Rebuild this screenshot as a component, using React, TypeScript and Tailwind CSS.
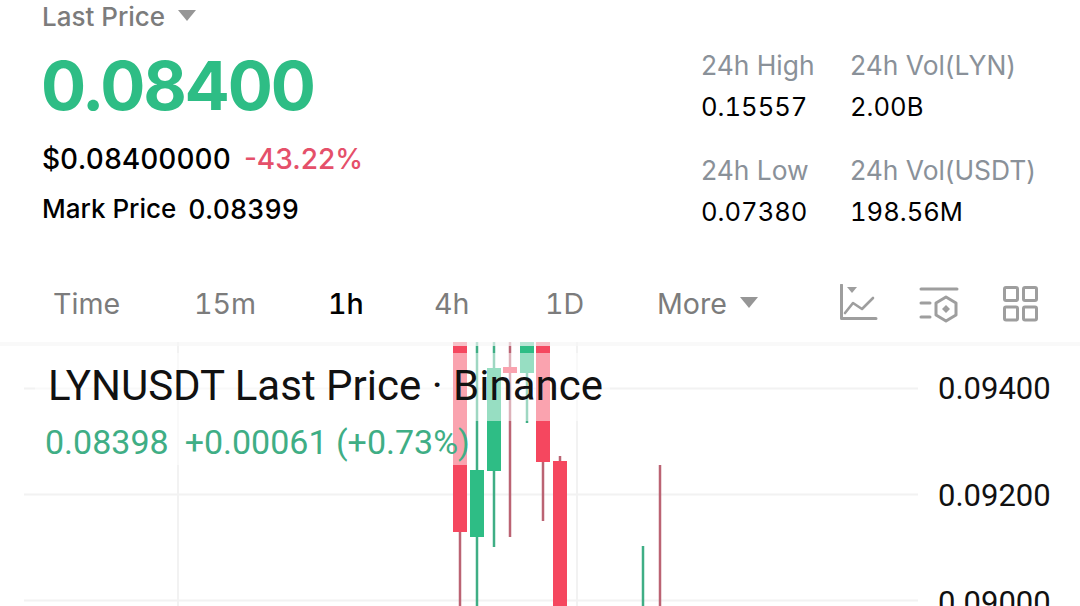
const tabs = [
  { label: "Time", width: "w-[141px]" },
  { label: "15m", width: "w-[134px]" },
  { label: "1h", width: "w-[106px]" },
  { label: "4h", width: "w-[111px]" },
  { label: "1D", width: "w-[112px]" },
];

const stats = [
  [
    { label: "24h High", value: "0.15557" },
    { label: "24h Low", value: "0.07380" },
  ],
  [
    { label: "24h Vol(LYN)", value: "2.00B" },
    { label: "24h Vol(USDT)", value: "198.56M" },
  ],
];

const RED = "#f5475f";
const GREEN = "#2ebd85";
const RED_WICK = "#bb6373";
const GREEN_WICK = "#3fae85";

function Triangle({ className }: { className: string }) {
  return (
    <svg viewBox="0 0 18 11" className={className}>
      <path d="M0 0h18l-9 11z" fill="#969696" />
    </svg>
  );
}

function IndicatorIcon() {
  return (
    <svg width="40" height="40" viewBox="0 0 40 40" fill="none" stroke="#9e9e9e" strokeWidth="3">
      <path d="M3.5 1v33.5H38" strokeLinecap="round" strokeLinejoin="round" />
      <path d="M9 3h10l-5 6z" fill="#9e9e9e" stroke="none" />
      <path d="M7 29l8-10 9 6 11-11" strokeWidth="2.6" strokeLinecap="round" strokeLinejoin="round" />
    </svg>
  );
}

function SettingsIcon() {
  return (
    <svg width="40" height="40" viewBox="0 0 40 40" fill="none" stroke="#9e9e9e" strokeWidth="3">
      <path d="M2 5h36M2 19h9M2 33h9" strokeLinecap="round" />
      <path d="M27 13l10 6v12l-10 6-10-6V19z" strokeLinejoin="round" />
      <path d="M27 21l4 4-4 4-4-4z" fill="#9e9e9e" stroke="none" />
    </svg>
  );
}

function GridIcon() {
  return (
    <svg width="40" height="40" viewBox="0 0 40 40" fill="none" stroke="#9e9e9e" strokeWidth="3">
      <rect x="4.5" y="3.5" width="13" height="13" rx="1.5" />
      <rect x="23.5" y="3.5" width="13" height="13" rx="1.5" />
      <rect x="4.5" y="23" width="13" height="13" rx="1.5" />
      <rect x="23.5" y="23" width="13" height="13" rx="1.5" />
    </svg>
  );
}

function Chart() {
  return (
    <svg className="absolute inset-0 h-full w-full" viewBox="0 342 1080 264">
      {/* grid */}
      <path d="M24 388.5H918M24 494.5H918M24 600.5H918" stroke="#f2f2f2" strokeWidth="2" />
      <path d="M178 342V606M577 342V606" stroke="#f2f2f2" strokeWidth="2" />

      {/* wicks */}
      <g strokeWidth="2.5">
        <path d="M460 532V606" stroke={RED_WICK} />
        <path d="M477 342V606" stroke={GREEN_WICK} />
        <path d="M494 342V547" stroke={GREEN_WICK} />
        <path d="M510 342V537" stroke={RED_WICK} />
        <path d="M527 373V423" stroke={GREEN_WICK} />
        <path d="M543 462V521" stroke={RED_WICK} />
        <path d="M560 456V462" stroke={RED_WICK} />
        <path d="M643 546V606" stroke={GREEN_WICK} />
        <path d="M660 465V606" stroke={RED_WICK} />
      </g>

      {/* bodies */}
      <rect x="453" y="342" width="14" height="190" fill={RED} />
      <rect x="470" y="470" width="14" height="67" fill={GREEN} />
      <rect x="487" y="368" width="14" height="103" fill={GREEN} />
      <rect x="503" y="367" width="14" height="6" fill={RED} />
      <rect x="520" y="342" width="14" height="31" fill={GREEN} />
      <rect x="536" y="342" width="14" height="120" fill={RED} />
      <rect x="553" y="461" width="14" height="145" fill={RED} />
    </svg>
  );
}

export default function App() {
  return (
    <div className="flex h-[606px] w-[1080px] flex-col overflow-hidden bg-white font-['Inter',sans-serif]">
      <div className="flex h-[272px] justify-between pl-[42px]">
        <div>
          <div className="flex h-[34px] items-center gap-[13px] text-[26px] font-medium leading-[34px] text-[#7c7c7c]">
            <span>Last Price</span>
            <Triangle className="mb-[4px] h-[11px] w-[18px]" />
          </div>
          <div className="mt-[8px] -ml-[1px] text-[67px] font-bold leading-[88px] tracking-[-2.2px] text-[#2ebd85]">0.08400</div>
          <div className="mt-[11px] flex gap-[13px] text-[28px] leading-[36px]">
            <span className="font-medium text-black tabular-nums">$0.08400000</span>
            <span className="font-medium text-[#e5506a]">-43.22%</span>
          </div>
          <div className="mt-[15px] flex items-center gap-[12px] text-[26px] font-medium leading-[34px] text-black">
            <span>Mark Price</span>
            <span className="text-[26.6px] tabular-nums">0.08399</span>
          </div>
        </div>
        <div className="flex w-[379px] pt-[44px]">
          {stats.map((column, index) => (
            <div key={index} className={index === 0 ? "w-[149px]" : ""}>
              {column.map((stat) => (
                <div key={stat.label} className="mb-[21px] text-[26.4px] leading-[42px]">
                  <div className="text-[#8a9199]">{stat.label}</div>
                  <div className="text-[25.6px] text-black tabular-nums">{stat.value}</div>
                </div>
              ))}
            </div>
          ))}
        </div>
      </div>

      <div className="flex h-[70px] items-center pb-[6px] pl-[53px] pr-[40px] text-[28.6px] text-[#7c7c7c] tabular-nums">
        {tabs.map((tab) => (
          <div key={tab.label} className={`${tab.width} ${tab.label === "1h" ? "font-medium text-black" : ""}`}>
            {tab.label}
          </div>
        ))}
        <div className="flex items-center gap-[13px]">
          <span>More</span>
          <Triangle className="mb-[3px] h-[11px] w-[18px]" />
        </div>
        <div className="ml-auto flex gap-[41px]">
          <IndicatorIcon />
          <SettingsIcon />
          <GridIcon />
        </div>
      </div>

      <div className="relative flex-1 font-['Roboto',sans-serif]">
        <Chart />
        <div className="absolute inset-x-0 top-0 h-[4px] bg-[#f6f6f6]/70" />
        <div className="absolute left-[35px] top-[11px]">
          <div className="h-[68px] w-[575px] bg-white/50 pl-[13px] text-[42px] leading-[66px] text-[#111111]">
            LYNUSDT Last Price · Binance
          </div>
          <div className="flex h-[44px] w-[436px] gap-[16px] bg-white/50 pl-[10px] text-[34px] leading-[42px] text-[#3fae85]">
            <span>0.08398</span>
            <span>+0.00061 (+0.73%)</span>
          </div>
        </div>
        <div className="absolute left-[938px] top-[-7px] text-[31px] leading-[107px] text-[#111111]">
          <div>0.09400</div>
          <div>0.09200</div>
          <div>0.09000</div>
        </div>
      </div>
    </div>
  );
}
